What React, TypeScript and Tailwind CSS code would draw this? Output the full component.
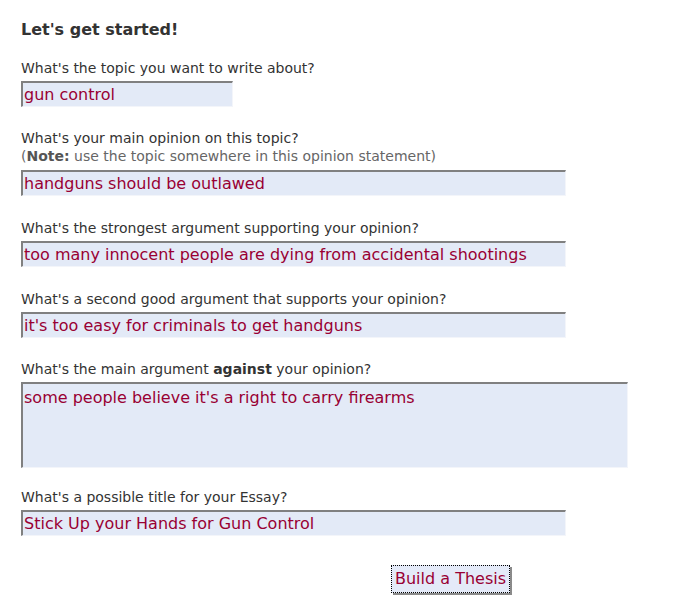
import React from "react";

const font = { fontFamily: '"DejaVu Sans", Verdana, sans-serif' };

const inputCls =
  "block h-[26px] bg-[#e3eaf7] border-t-2 border-l-2 border-r border-b border-t-[#808080] border-l-[#808080] border-r-[#f3f5fa] border-b-[#f3f5fa] px-[1px] text-[16px] text-[#990033] outline-none";

function Label({ children }: { children: React.ReactNode }) {
  return <div className="text-[14px] leading-[18px] text-[#333]">{children}</div>;
}

export default function App() {
  return (
    <div className="bg-white w-[674px] h-[612px] pl-[21px] pt-[20px]" style={font}>
      <h1 className="text-[16px] leading-[20px] font-bold text-[#333]">Let's get started!</h1>

      <div className="mt-[19px]">
        <Label>What's the topic you want to write about?</Label>
        <input readOnly value="gun control" className={inputCls + " mt-[4px] w-[212px]"} style={font} />
      </div>

      <div className="mt-[22px]">
        <Label>What's your main opinion on this topic?</Label>
        <Label>
          <span className="text-[#666]">
            (<b className="text-[#555]">Note:</b> use the topic somewhere in this opinion statement)
          </span>
        </Label>
        <input readOnly value="handguns should be outlawed" className={inputCls + " mt-[5px] w-[545px]"} style={font} />
      </div>

      <div className="mt-[23px]">
        <Label>What's the strongest argument supporting your opinion?</Label>
        <input
          readOnly
          value="too many innocent people are dying from accidental shootings"
          className={inputCls + " mt-[4px] w-[545px]"}
          style={font}
        />
      </div>

      <div className="mt-[23px]">
        <Label>What's a second good argument that supports your opinion?</Label>
        <input
          readOnly
          value="it's too easy for criminals to get handguns"
          className={inputCls + " mt-[4px] w-[545px]"}
          style={font}
        />
      </div>

      <div className="mt-[22px]">
        <Label>
          What's the main argument <b>against</b> your opinion?
        </Label>
        <textarea
          readOnly
          value="some people believe it's a right to carry firearms"
          className="block mt-[4px] w-[607px] h-[86px] resize-none bg-[#e3eaf7] border-t-2 border-l-2 border-r border-b border-t-[#808080] border-l-[#808080] border-r-[#f3f5fa] border-b-[#f3f5fa] px-[1px] pt-[4px] pb-0 text-[16px] leading-[20px] text-[#990033] outline-none"
          style={font}
        />
      </div>

      <div className="mt-[20px]">
        <Label>What's a possible title for your Essay?</Label>
        <input
          readOnly
          value="Stick Up your Hands for Gun Control"
          className={inputCls + " mt-[4px] w-[545px]"}
          style={font}
        />
      </div>

      <div className="mt-[29px] pl-[370px]">
        <button
          className="h-[28px] px-[3px] bg-[#e4eaf8] text-[16px] leading-[20px] text-[#990033] border border-dotted border-black shadow-[2px_2px_0_#8a8a8a]"
          style={font}
        >
          Build a Thesis
        </button>
      </div>
    </div>
  );
}
